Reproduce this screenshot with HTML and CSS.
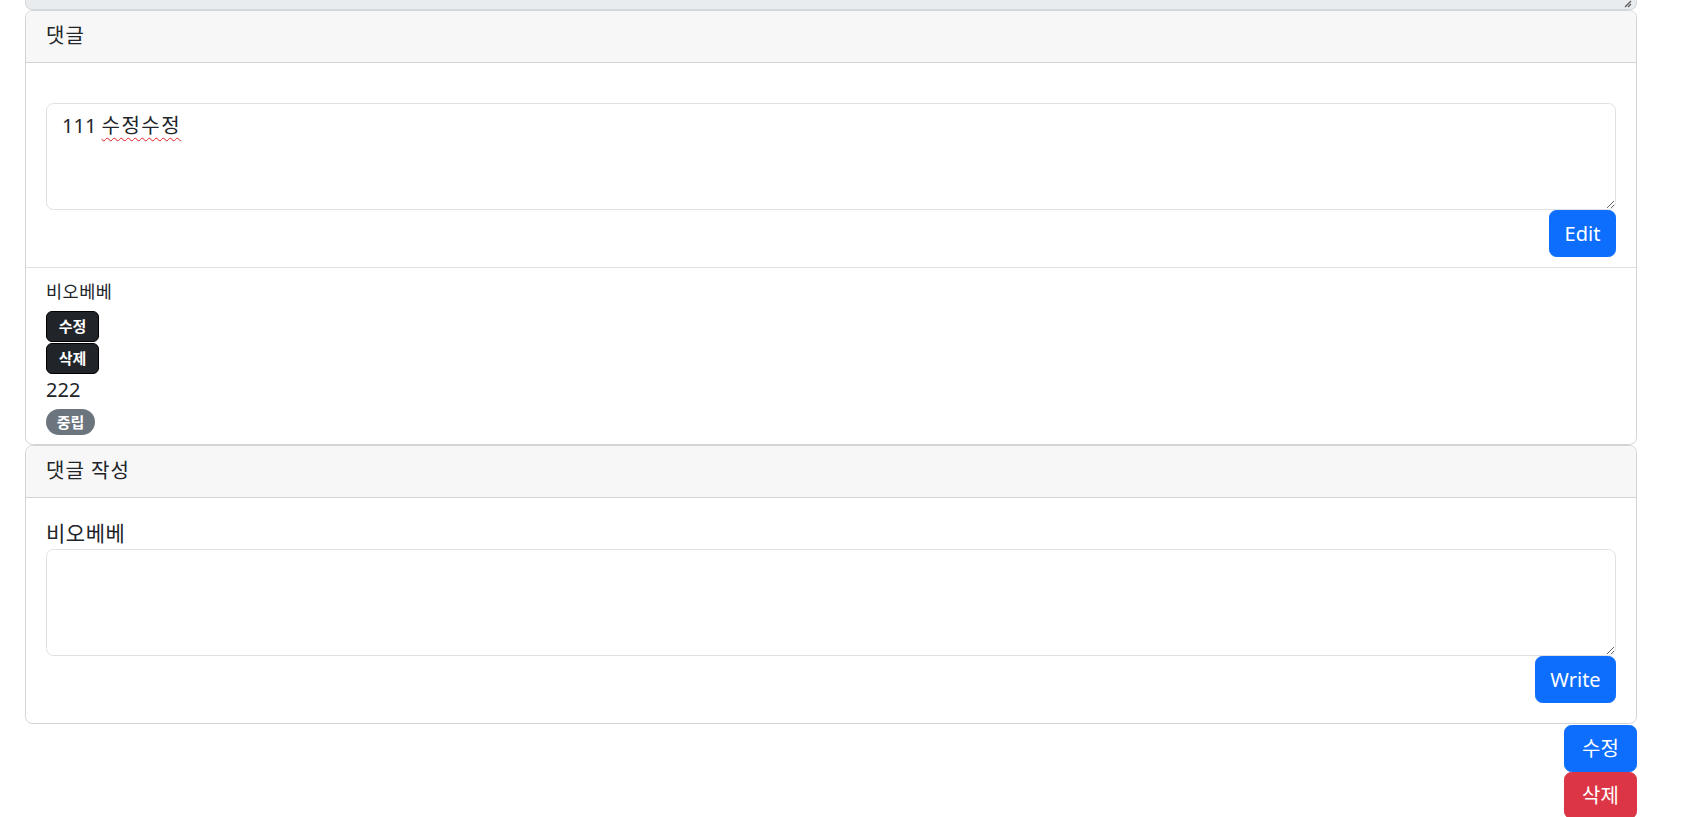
FILE: index.html
```html
<!DOCTYPE html>
<html lang="ko">
<head>
<meta charset="utf-8">
<title>댓글</title>
<link rel="stylesheet" href="styles.css">
</head>
<body>
<div class="page">
  <div class="top-strip">
    <svg class="grip" width="9" height="8" viewBox="0 0 9 8"><path d="M8 1 L2 7 M8 4 L5 7" stroke="#555" stroke-width="1.2" fill="none"/></svg>
  </div>

  <div class="card">
    <div class="card-header">댓글</div>
    <div class="list-item">
      <div class="spacer"></div>
      <div class="fake-textarea"><span class="num">111</span> <span class="misspelled">수정수정</span></div>
      <div class="actions"><button class="btn btn-primary btn-edit">Edit</button></div>
    </div>
    <div class="list-item comment">
      <div class="author">비오베베</div>
      <div class="badge-stack">
        <button class="badge-btn">수정</button>
        <button class="badge-btn">삭제</button>
      </div>
      <div class="comment-text">222</div>
      <span class="pill">중립</span>
    </div>
  </div>

  <div class="card">
    <div class="card-header">댓글 작성</div>
    <div class="card-body">
      <label class="writer">비오베베</label>
      <textarea class="form-control"></textarea>
      <div class="actions"><button class="btn btn-primary btn-write">Write</button></div>
    </div>
  </div>

  <div class="page-actions">
    <button class="btn btn-primary btn-wide">수정</button>
    <button class="btn btn-danger btn-wide">삭제</button>
  </div>
</div>
</body>
</html>
```

FILE: styles.css
```css
* { box-sizing: border-box; }
html, body { margin: 0; padding: 0; background: #fff; }
body {
  font-family: "Noto Sans", "Noto Sans CJK KR", sans-serif;
  font-size: 20px;
  line-height: 30px;
  color: #212529;
}
.page {
  width: 1637px;
  padding-left: 25px;
  display: flex;
  flex-direction: column;
}
.top-strip {
  height: 10px;
  background: #e9ecef;
  border: 1px solid #d6d9dc;
  border-top: none;
  border-radius: 0 0 7px 7px;
  display: flex;
  justify-content: flex-end;
  align-items: flex-start;
  padding-right: 4px;
}
.grip { display: block; }
.card {
  border: 1px solid #d3d4d5;
  border-radius: 7.5px;
  background: #fff;
  overflow: hidden;
}
.card-header {
  background: #f7f7f7;
  padding: 10px 20px;
  height: 52px;
  line-height: 30px;
  border-bottom: 1px solid #d3d4d5;
  font-size: 20px;
  letter-spacing: 1px;
}
.list-item {
  padding: 10px 20px;
  border-bottom: 1px solid #dfe0e1;
}
.list-item:last-child { border-bottom: none; }
.spacer { height: 30px; }
.fake-textarea, .form-control {
  display: block;
  width: 100%;
  height: 107px;
  border: 1px solid #dee2e6;
  border-radius: 7.5px;
  padding: 7px 15px;
  font: inherit;
  font-size: 20px;
  line-height: 30px;
  color: #212529;
  background: #fff;
  resize: vertical;
  overflow: auto;
  margin: 0;
}
.misspelled {
  letter-spacing: 1.5px;
  text-decoration: underline wavy #e0201e;
  text-decoration-thickness: 1px;
  text-underline-offset: 4px;
}
.actions {
  display: flex;
  justify-content: flex-end;
}
.btn {
  display: inline-flex;
  align-items: center;
  justify-content: center;
  height: 47px;
  padding: 0 14px;
  border: 1px solid transparent;
  border-radius: 7.5px;
  font-family: inherit;
  font-size: 20px;
  line-height: 30px;
  color: #fff;
  cursor: pointer;
}
.btn-primary { background: #0d6efd; border-color: #0d6efd; }
.btn-danger { background: #dc3545; border-color: #dc3545; }
.btn-edit { width: 67px; }
.btn-write { width: 81px; }
.btn-wide { width: 73px; }
.comment { padding-bottom: 9px; }
.author {
  font-size: 17.5px;
  line-height: 26px;
  letter-spacing: 0.5px;
}
.badge-stack {
  display: flex;
  flex-direction: column;
  align-items: flex-start;
  gap: 1px;
  margin-top: 7px;
}
.badge-btn {
  width: 53px;
  height: 31px;
  background: #212529;
  color: #fff;
  border: 1.5px solid #000;
  border-radius: 6px;
  font-family: inherit;
  font-size: 15px;
  font-weight: 700;
  line-height: 1;
  padding: 0;
}
.comment-text {
  font-size: 20px;
  line-height: 30px;
  margin-top: 1px;
}
.pill {
  display: inline-flex;
  align-items: center;
  justify-content: center;
  width: 49px;
  height: 26px;
  margin-top: 4px;
  background: #6c757d;
  color: #fff;
  border-radius: 13px;
  font-size: 15px;
  font-weight: 700;
  line-height: 1;
  vertical-align: top;
}
.card-body { padding: 20px; }
.writer {
  display: block;
  height: 31px;
  font-size: 21px;
  line-height: 30px;
  letter-spacing: 0.5px;
}
.page-actions {
  display: flex;
  flex-direction: column;
  align-items: flex-end;
  padding-top: 1px;
}
```
